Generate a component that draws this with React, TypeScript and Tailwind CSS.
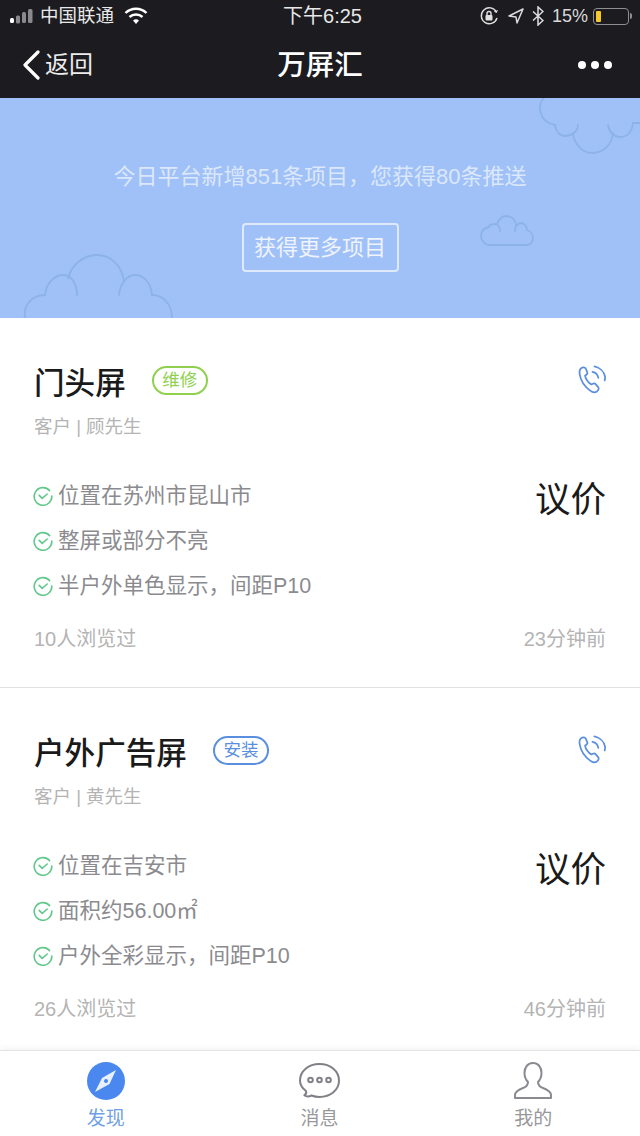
import React from "react";

const FONT = "font-['Liberation_Sans','Noto_Sans_CJK_SC',sans-serif]";

function Check() {
  return (
    <svg width="20" height="20" viewBox="0 0 20 20" fill="none" stroke="#62c78a" strokeWidth="1.6" strokeLinecap="round" strokeLinejoin="round" className="shrink-0">
      <path d="M16.600 4.600A8.800 8.800 0 1 0 18.800 10" />
      <path d="M6.200 9.400l3 3 5-4.400" />
    </svg>
  );
}

function Phone() {
  return (
    <svg width="29" height="30" viewBox="0 0 30 31" fill="none" stroke="#5a8fe0" strokeWidth="1.800" strokeLinecap="round" strokeLinejoin="round">
      <path d="M3 3.500c2-1.600 4.200-1.500 5 .2l1.600 3.600c.5 1.200.1 2-1 2.800l-1.300 1c.6 3.400 3.500 7.600 6.500 9l1.600-.8c1.100-.5 2-.4 2.800.5l2.600 3c1.100 1.500.6 3.200-1.200 4.500-2 1.300-4.500 1.200-7-.8C7 22.500 2.700 15.500 1.700 9.500 1.300 7 1.500 4.800 3 3.500z" />
      <path d="M15 7c3.300.6 5.500 3 6 6.200" />
      <path d="M17 1.500c5.300 1.200 10 5.200 11 10.500 .2 1.500 0 2.500-.4 4" />
    </svg>
  );
}

function Card({ title, tag, tagColor, customer, items, viewers, ago, divider }: {
  title: string; tag: string; tagColor: string; customer: string; items: React.ReactNode[]; viewers: string; ago: string; divider: boolean;
}) {
  return (
    <section className={`px-[34px] pt-[45px] ${divider ? "border-b border-[#e2e2e2] h-[370px]" : "h-[362px]"}`}>
      <div className="flex items-start justify-between h-[38px]">
        <div className="flex items-center h-[38px]">
          <h2 className="text-[30.6px] leading-[38px] pt-[2px] font-medium text-[#1a1a1a]">{title}</h2>
          <span className={`ml-[26px] -mt-[3px] flex items-center justify-center w-[56px] h-[29px] rounded-full border-2 text-[17.500px] leading-none ${tagColor}`}>{tag}</span>
        </div>
        <div className="-mr-[1px] mt-[2px]"><Phone /></div>
      </div>
      <p className="mt-[14px] text-[18.500px] leading-[24px] text-[#b4b4b4]">{customer}</p>
      <div className="mt-[42px] flex justify-between items-start">
        <ul className="flex flex-col gap-[15px]">
          {items.map((it, i) => (
            <li key={i} className="flex items-center gap-[5px] h-[30px] -ml-[1px] text-[21.500px] text-[#8b8b8f]">
              <Check />
              <span>{it}</span>
            </li>
          ))}
        </ul>
        <div className="text-[35.500px] leading-[44px] text-[#1a1a1a] -mt-[3px]">议价</div>
      </div>
      <div className="mt-[25px] flex justify-between text-[20px] leading-[26px] text-[#b4b4b4]">
        <span>{viewers}</span>
        <span>{ago}</span>
      </div>
    </section>
  );
}

export default function App() {
  return (
    <div className={`w-[640px] h-[1136px] bg-white overflow-hidden flex flex-col ${FONT}`}>
      <header className="h-[98px] bg-[#1b1b20] text-white shrink-0 flex flex-col">
        <div className="h-[32px] grid grid-cols-3 items-center pl-[9px] pr-[8px]">
          <div className="flex items-center">
            <svg width="26" height="16" viewBox="0 0 26 16" fill="#8a8a8e">
              <rect x="1" y="10" width="4" height="5" rx="1.500" fill="#fff" />
              <rect x="7" y="7.500" width="4" height="8" rx="1.500" />
              <rect x="13" y="4" width="4" height="11" rx="1.500" />
              <rect x="19" y="1" width="4.500" height="14" rx="1.500" />
            </svg>
            <span className="ml-[5px] text-[18.500px] text-[#e8e8e8] whitespace-nowrap">中国联通</span>
            <svg width="24" height="18" viewBox="0 0 24 18" fill="none" stroke="#fff" strokeWidth="2.400" className="ml-[10px] shrink-0">
              <path d="M1.500 6a15 15 0 0 1 21 0" />
              <path d="M5.500 10a9.500 9.500 0 0 1 13 0" />
              <path d="M12 17l-3-3.500a4.500 4.500 0 0 1 6 0z" fill="#fff" stroke="none" />
            </svg>
          </div>
          <div className="text-center pl-[4px] text-[20px] text-[#e8e8e8] whitespace-nowrap">下午6:25</div>
          <div className="flex items-center justify-end text-[#d8d8d8]">
            <svg width="20" height="20" viewBox="0 0 20 20" fill="none" stroke="#e0e0e0" strokeWidth="1.400" className="shrink-0">
              <path d="M18 12a8 8 0 1 1-.6-6" />
              <path d="M19 4l-1.400 3-2.800-1.500" fill="#e0e0e0" stroke="none" />
              <rect x="6.500" y="9" width="7" height="5.500" rx="1" fill="#e0e0e0" stroke="none" />
              <path d="M8 9V7.500a2 2 0 0 1 4 0V9" />
            </svg>
            <svg width="16" height="16" viewBox="0 0 16 16" fill="none" stroke="#dcdcdc" strokeWidth="1.500" strokeLinejoin="round" className="ml-[9px] shrink-0">
              <path d="M15 1L1 8l7 1 1 6z" />
            </svg>
            <svg width="12" height="20" viewBox="0 0 12 20" fill="none" stroke="#e0e0e0" strokeWidth="1.500" className="ml-[8px] shrink-0">
              <path d="M1 5.500l10 9-5 4.500V1l5 4.500-10 9" />
            </svg>
            <span className="ml-[8px] text-[18px]">15%</span>
            <div className="ml-[5px] flex items-center">
              <div className="w-[36px] h-[17px] rounded-[4px] border border-[#8e8e8e] p-[2px]">
                <div className="w-[5px] h-full rounded-[1px] bg-[#f5c92e]" />
              </div>
              <div className="ml-[1px] w-[2px] h-[6px] rounded-r-sm bg-[#8e8e8e]" />
            </div>
          </div>
        </div>
        <nav className="flex-1 grid grid-cols-3 items-center px-[22px]">
          <div className="flex items-center">
            <svg width="18" height="30" viewBox="0 0 18 30" fill="none" stroke="#fff" strokeWidth="3.200" strokeLinecap="round" strokeLinejoin="round">
              <path d="M16 2L3 15l13 13" />
            </svg>
            <span className="ml-[5px] text-[24px] text-[#ececec]">返回</span>
          </div>
          <h1 className="text-center text-[28.500px] font-medium whitespace-nowrap">万屏汇</h1>
          <div className="flex justify-end gap-[5px] pr-[6px]">
            <i className="w-[8px] h-[8px] rounded-full bg-white" />
            <i className="w-[8px] h-[8px] rounded-full bg-white" />
            <i className="w-[8px] h-[8px] rounded-full bg-white" />
          </div>
        </nav>
      </header>

      <div className="relative h-[220px] shrink-0 bg-[#a0c1f8] flex flex-col items-center overflow-hidden">
        <svg className="absolute left-0 top-0" width="640" height="220" viewBox="0 0 640 220" fill="none" stroke="#8cb3e8" strokeWidth="1.800" strokeLinecap="round" strokeLinejoin="round">
          <path d="M544 0c-7 5-6 24 11 27" />
          <path d="M555 27c1 7 5 11 10 11 7 0 13-5 13-11" />
          <path d="M573 37c3 11 10 18 19 18 12 0 20-9 21-20" />
          <path d="M608 27c1 7 6 12 12 12 8 0 12-6 13-14h7" />
          <path d="M25 220c-2-13 7-23 20-23" />
          <path d="M45 197c1-11 9-20 18-20 8 0 14 8 14 20" />
          <path d="M68 180c4-14 16-23 29-23 14 0 25 11 27 26" />
          <path d="M119 197c1-11 8-20 16-20 9 0 16 8 17 20" />
          <path d="M152 197c11 0 20 9 20 23" />
          <path d="M490 147h37c4 0 6-4 6-7 0-4-3-7-6-8c0-4-3-7-6-7-3 0-6 3-6 8" />
          <path d="M497 126c2-5 5-8 9-8 5 0 9 3 10 9" />
          <path d="M500 133c0-4-2-7-5-7-3 0-6 1-6 3-5 1-8 4-8 9 0 4 3 9 9 9" />
        </svg>
        <p className="relative mt-[63px] text-[22px] leading-[32px] text-[#dbe7fb]">今日平台新增851条项目，您获得80条推送</p>
        <button className="relative mt-[30px] w-[157px] h-[49px] rounded-[4px] border-2 border-[#dfe9fb] text-[22px] text-[#eef3fd]">获得更多项目</button>
      </div>

      <Card
        divider
        title="门头屏"
        tag="维修"
        tagColor="border-[#8fd14f] text-[#8fd14f]"
        customer="客户 | 顾先生"
        items={["位置在苏州市昆山市", "整屏或部分不亮", "半户外单色显示，间距P10"]}
        viewers="10人浏览过"
        ago="23分钟前"
      />
      <Card
        divider={false}
        title="户外广告屏"
        tag="安装"
        tagColor="border-[#5a8fe0] text-[#5a8fe0]"
        customer="客户 | 黄先生"
        items={["位置在吉安市", "面积约56.00㎡", "户外全彩显示，间距P10"]}
        viewers="26人浏览过"
        ago="46分钟前"
      />

      <footer className="flex-1 grid grid-cols-3 bg-white border-t border-[#e4e4e4] shadow-[0_-2px_6px_rgba(0,0,0,0.05)] z-10">
        <div className="flex flex-col items-center pt-[11px] -ml-[2px]">
          <svg width="38" height="38" viewBox="0 0 38 38">
            <circle cx="19" cy="19" r="19" fill="#4a87ee" />
            <path d="M29 8L22.500 22 8 30l7-14z" fill="#e8f0fd" />
            <circle cx="19" cy="19" r="2" fill="#4a87ee" />
          </svg>
          <span className="mt-[7px] text-[19px] leading-[24px] text-[#6f9fe4]">发现</span>
        </div>
        <div className="flex flex-col items-center pt-[11px] -ml-[1px]">
          <svg width="43" height="38" viewBox="0 0 42 38" fill="none" stroke="#808086" strokeWidth="2">
            <path d="M6 33c2-1 2-2.500 1.500-4C3.500 26 1.500 22.500 1.500 18.500 1.500 9 10 2 21 2s19.500 7 19.500 16.500S32 35 21 35c-3 0-5.500-.5-8-1.500-2 1-4.500 1.500-7 0z" strokeLinejoin="round" />
            <circle cx="12" cy="18" r="2.300" />
            <circle cx="21" cy="18" r="2.300" />
            <circle cx="30" cy="18" r="2.300" />
          </svg>
          <span className="mt-[7px] text-[19px] leading-[24px] text-[#98989c]">消息</span>
        </div>
        <div className="flex flex-col items-center pt-[11px]">
          <svg width="38" height="38" viewBox="0 0 38 38" fill="none" stroke="#8a8a90" strokeWidth="2" strokeLinejoin="round">
            <path d="M1 36h36v-3c0-3-3-5-8-7-4-1.500-5-4-5-6 2-2 3.500-5.500 3.500-9C27.500 5 24 1 19 1S10.500 5 10.500 11c0 3.500 1.500 7 3.500 9 0 2-1 4.500-5 6-5 2-8 4-8 7z" />
          </svg>
          <span className="mt-[7px] text-[19px] leading-[24px] text-[#98989c]">我的</span>
        </div>
      </footer>
    </div>
  );
}
